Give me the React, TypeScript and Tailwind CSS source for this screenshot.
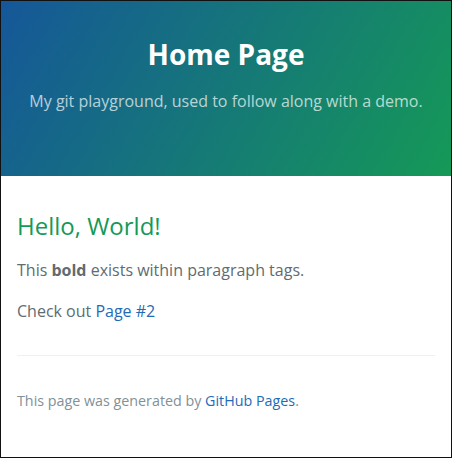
import React from "react";

const App = () => {
  return (
    <div className="w-[452px] h-[458px] border border-[#111] bg-white overflow-hidden font-['Open_Sans',sans-serif]">
      <header className="h-[175px] bg-[linear-gradient(120deg,#155799,#159957)] px-4 pt-[32px] text-center">
        <h1 className="text-[28px] leading-[42px] font-bold text-white">Home Page</h1>
        <h2 className="mt-[14px] text-[16px] leading-[24px] font-normal text-white/70">
          My git playground, used to follow along with a demo.
        </h2>
      </header>

      <main className="px-4 pt-[32px] text-[16px] leading-[24px] text-[#606c71]">
        <h1 className="text-[24px] leading-[36px] font-normal text-[#159957]">Hello, World!</h1>
        <p className="mt-[14px]">
          This <strong className="font-bold">bold</strong> exists within paragraph tags.
        </p>
        <p className="mt-[17px]">
          Check out <a className="text-[#1e6bb8]">Page #2</a>
        </p>

        <footer className="mt-[32px] border-t border-[#eff0f1] pt-[32px]">
          <span className="text-[14.3px] leading-[21px] text-[#819198]">
            This page was generated by <a className="text-[#1e6bb8]">GitHub Pages</a>.
          </span>
        </footer>
      </main>
    </div>
  );
};

export default App;
